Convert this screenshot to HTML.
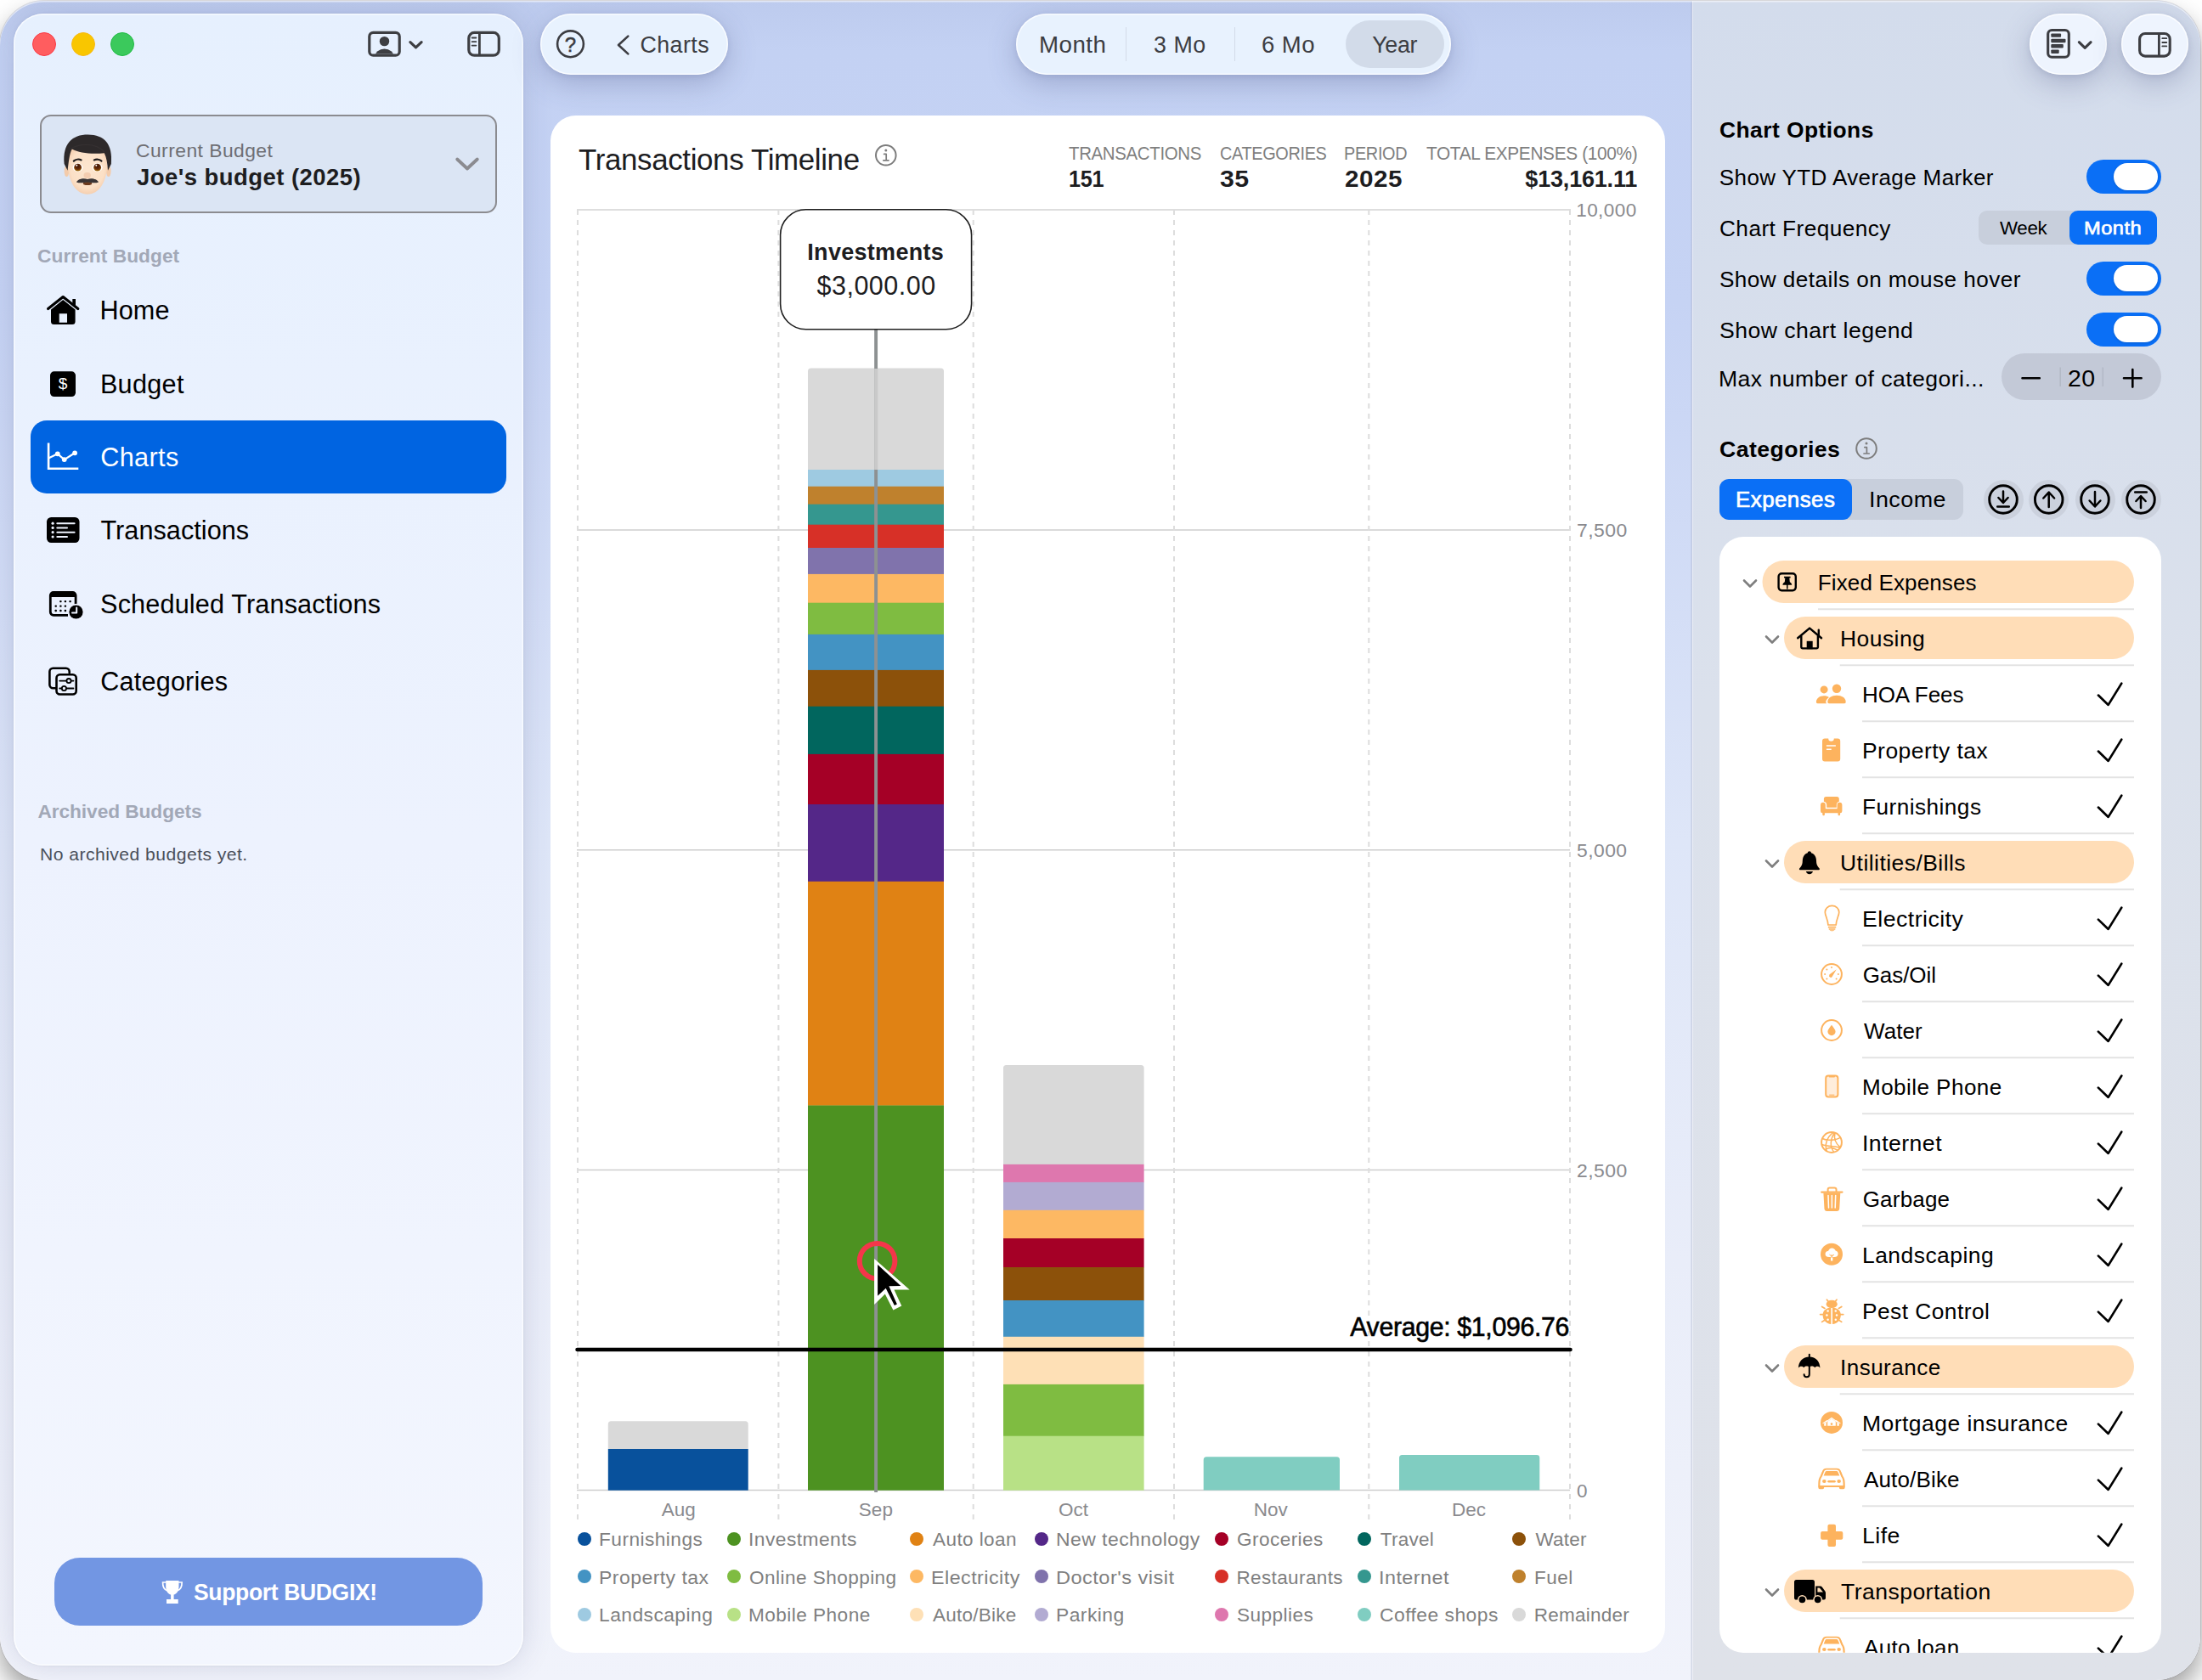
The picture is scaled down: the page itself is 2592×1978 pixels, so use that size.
<!DOCTYPE html><html><head><meta charset="utf-8"><title>Budgix</title><style>
*{box-sizing:border-box;margin:0;padding:0}
html,body{width:2592px;height:1978px;overflow:hidden;background:#fff}
body{font-family:"Liberation Sans",sans-serif;color:#000;position:relative}
.abs{position:absolute}
.t{position:absolute;white-space:nowrap;line-height:1}
svg{position:absolute;left:0;top:0;overflow:visible}
#win{position:absolute;left:0;top:1px;width:2590px;height:1977px;border-radius:52px;overflow:hidden;
 background:linear-gradient(180deg,#bdcbee 0%,#c3d1f3 3%,#c6d3f4 18%,#dee6f8 50%,#e9edf9 75%,#f1f3fb 100%);}
#in{position:absolute;left:0;top:-1px;width:2592px;height:1978px}
#winshadow{position:absolute;left:0;top:1px;width:2590px;height:1977px;border-radius:52px;box-shadow:0 0 0 1px rgba(120,120,130,.22),0 16px 30px rgba(0,0,0,.38)}
#sidebar{position:absolute;left:16px;top:16px;width:600px;height:1945px;border-radius:35px;
 background:linear-gradient(180deg,#e6f0fe 0%,#edf2fe 50%,#f3f6fe 100%);
 box-shadow:0 0 0 1.5px rgba(255,255,255,.65) inset,0 0 34px rgba(60,65,110,.17),0 0 3px rgba(60,65,110,.10);}
#insp{position:absolute;left:1993.4px;top:0;width:600px;height:1978px;
 background:linear-gradient(180deg,#d3dcec 0%,#dbe1ec 42%,#dfe2e9 100%);
 box-shadow:-1.3px 0 0 rgba(255,255,255,.7), -2.4px 0 0 rgba(140,150,185,.4)}
.pill{position:absolute;background:#e8f2fe;border-radius:36px;box-shadow:0 0 0 1.5px rgba(255,255,255,.7) inset,0 10px 34px rgba(60,70,120,.28),0 2px 6px rgba(60,70,120,.12)}
#card{position:absolute;left:648px;top:136px;width:1312px;height:1810px;border-radius:30px;background:#fff;}
.tl{position:absolute;width:28px;height:28px;border-radius:50%;top:38px}
#bsel{position:absolute;left:47px;top:135px;width:538px;height:116px;border-radius:13px;background:#dbe5f4;border:2px solid #8b8b90}
#navsel{position:absolute;left:36px;top:495px;width:560px;height:86px;border-radius:19px;background:#0064e1}
#support{position:absolute;left:64px;top:1834px;width:504px;height:80px;border-radius:30px;background:#7296e3}
</style></head><body>
<div id="winshadow"></div><div id="win"><div id="in">
<div id="insp"></div>
<div id="sidebar"></div>
<div id="card"></div>
<div class="tl" style="left:38px;background:#ff5d5f;border:1.5px solid #fa3a45"></div>
<div class="tl" style="left:84px;background:#f9c600;border:1.5px solid #f7b916"></div>
<div class="tl" style="left:130px;background:#3bc95c;border:1.5px solid #21bb45"></div>
<div id="bsel"></div>
<div class="t" style="left:159.9px;top:167px;font-size:22.00px;font-weight:400;color:#6e6e73;letter-spacing:0.45px;transform:scaleX(1.0376);transform-origin:0 50%;">Current Budget</div>
<div class="t" style="left:160.6px;top:195px;font-size:27.20px;font-weight:700;color:#1d1d1f;letter-spacing:0.45px;transform:scaleX(1.0105);transform-origin:0 50%;">Joe's budget (2025)</div>
<div class="t" style="left:44.1px;top:290px;font-size:22.70px;font-weight:700;color:#a2a8b7;letter-spacing:0.05px;">Current Budget</div>
<div id="navsel"></div>
<div class="t" style="left:117.6px;top:350px;font-size:30.60px;font-weight:400;color:#000;letter-spacing:0.08px;">Home</div>
<div class="t" style="left:117.9px;top:437px;font-size:30.60px;font-weight:400;color:#000;letter-spacing:0.32px;">Budget</div>
<div class="t" style="left:118.2px;top:523px;font-size:30.60px;font-weight:400;color:#fff;letter-spacing:0.40px;">Charts</div>
<div class="t" style="left:118.5px;top:609px;font-size:30.60px;font-weight:400;color:#000;letter-spacing:0.05px;">Transactions</div>
<div class="t" style="left:118.1px;top:696px;font-size:30.60px;font-weight:400;color:#000;letter-spacing:0.16px;">Scheduled Transactions</div>
<div class="t" style="left:118.2px;top:787px;font-size:30.60px;font-weight:400;color:#000;letter-spacing:0.21px;">Categories</div>
<div class="t" style="left:44.4px;top:944px;font-size:22.70px;font-weight:700;color:#a2a8b7;letter-spacing:-0.06px;">Archived Budgets</div>
<div class="t" style="left:46.8px;top:995px;font-size:21.00px;font-weight:400;color:#4a4f5a;letter-spacing:0.45px;transform:scaleX(1.0065);transform-origin:0 50%;">No archived budgets yet.</div>
<div id="support"></div>
<div class="t" style="left:228.2px;top:1862px;font-size:26.80px;font-weight:700;color:#fff;letter-spacing:-0.35px;transform:scaleX(0.9895);transform-origin:0 50%;">Support BUDGIX!</div>
<svg width="2592" height="1978" viewBox="0 0 2592 1978" fill="none">
<defs><clipPath id="cpP"><rect x="436.4" y="40" width="32.2" height="23.6" rx="2.5"/></clipPath></defs>
<rect x="434.8" y="38.4" width="35.4" height="26.8" rx="4.5" stroke="#3d3e42" stroke-width="3.2"/>
<g clip-path="url(#cpP)" fill="#3d3e42"><circle cx="452.5" cy="48.6" r="5.7"/><ellipse cx="452.5" cy="67" rx="11.2" ry="9.6"/></g>
<path d="M482.9 49.7 L489.5 55.9 L496.1 49.7" stroke="#3d3e42" stroke-width="3.2" stroke-linecap="round" stroke-linejoin="round"/>
<rect x="551.8" y="38.4" width="35.5" height="26.8" rx="6.5" stroke="#3d3e42" stroke-width="3.2"/>
<path d="M564.4 38.4V65.2" stroke="#3d3e42" stroke-width="2.8"/>
<path d="M555.6 44.5h4.8M555.6 49.1h4.8M555.6 53.6h4.8" stroke="#3d3e42" stroke-width="1.8" stroke-linecap="round"/>
<path d="M538.2 187.5 L550 198.5 L561.8 187.5" stroke="#8b8b90" stroke-width="3.8" stroke-linecap="round" stroke-linejoin="round"/>
<g transform="translate(60,145)"><defs><radialGradient id="skin" cx="0.5" cy="0.45" r="0.6"><stop offset="0" stop-color="#fde6cf"/><stop offset="0.7" stop-color="#fbe0c6"/><stop offset="1" stop-color="#f3c8a6"/></radialGradient><radialGradient id="iris" cx="0.5" cy="0.3" r="0.8"><stop offset="0" stop-color="#3c1405"/><stop offset="0.55" stop-color="#6b2e08"/><stop offset="1" stop-color="#c9960c"/></radialGradient></defs><ellipse cx="18.4" cy="56.5" rx="2.8" ry="6.6" fill="#f3cbaa"/><ellipse cx="67.8" cy="56.5" rx="2.8" ry="6.6" fill="#f3cbaa"/><path d="M19.6 45 C19.6 70 30 83.7 43 83.7 C56 83.7 66.5 70 66.5 45 L66.5 28 L19.6 28 Z" fill="url(#skin)"/><path d="M15.6 48 C13.5 24 25 13.6 43.5 13.6 C63 13.6 73 25 70.9 48 L67 55.8 C66.6 48 65.4 40.5 62.8 35.2 C50 36.8 33 35.6 24.8 30.6 C21.6 36 20.6 48 19.6 55.8 Z" fill="#2d292a"/><path d="M22 31 C32 24 52 22 63 34" stroke="#3a3637" stroke-width="1.2" fill="none" opacity=".6"/><path d="M26.8 44.6 C29 42.4 33 42.2 35.6 43.4" stroke="#1e1b1c" stroke-width="2.2" stroke-linecap="round" fill="none"/><path d="M50.8 43.4 C53.4 42.2 57.4 42.4 59.4 44.6" stroke="#1e1b1c" stroke-width="2.2" stroke-linecap="round" fill="none"/><ellipse cx="31.6" cy="52.2" rx="6" ry="5" fill="#fff"/><ellipse cx="54.6" cy="52.2" rx="6" ry="5" fill="#fff"/><circle cx="31.6" cy="52.2" r="4.4" fill="url(#iris)"/><circle cx="54.6" cy="52.2" r="4.4" fill="url(#iris)"/><circle cx="30.3" cy="49.8" r="1" fill="#fff"/><circle cx="53.3" cy="49.8" r="1" fill="#fff"/><ellipse cx="42.7" cy="61.4" rx="4.2" ry="3.4" fill="#f4cdb0"/><ellipse cx="43" cy="71" rx="5.2" ry="2" fill="#6b3a1e"/><path d="M30 69.4 C31.5 66 38 64.2 43 66 C48 64.2 54.5 66 56 69.4 C52 71.2 47 69.8 43 69.4 C39 69.8 34 71.2 30 69.4 Z" fill="#3a3536"/></g>
<path d="M56.6 363.6 L74.2 349.6 L91.8 363.6" stroke="#000" stroke-width="3.2" stroke-linecap="round" stroke-linejoin="round"/>
<path d="M85.3 352h3.7v8.5l-3.7-3z" fill="#000"/>
<path d="M60 364.5 L74.2 353 L88.6 364.5 V378.5 a3.5 3.5 0 0 1 -3.5 3.5 H63.5 a3.5 3.5 0 0 1 -3.5 -3.5 Z M69.7 369.3 V379.8 H79 V369.3 Z" fill="#000" fill-rule="evenodd"/>
<rect x="59" y="437.3" width="30" height="29.8" rx="4.8" fill="#000"/>
<path d="M57.1 522.9 V551.7 H91" stroke="#fff" stroke-width="2.6" stroke-linecap="square" stroke-linejoin="miter"/>
<path d="M57.6 539.3 L67.8 534.3 L75.7 541.1 L88.1 533.3" stroke="#fff" stroke-width="2.2"/>
<circle cx="67.8" cy="534.3" r="2.9" fill="#fff"/><circle cx="75.7" cy="541.1" r="2.9" fill="#fff"/><circle cx="88.1" cy="533.3" r="2.9" fill="#fff"/>
<rect x="55" y="609" width="38.5" height="30" rx="5.2" fill="#000"/>
<circle cx="62.1" cy="616.2" r="1.6" fill="#eef3fe"/><path d="M67.3 616.2 H87.6" stroke="#eef3fe" stroke-width="2" stroke-linecap="round"/>
<circle cx="62.1" cy="621.4" r="1.6" fill="#eef3fe"/><path d="M67.3 621.4 H79.0" stroke="#eef3fe" stroke-width="2" stroke-linecap="round"/>
<circle cx="62.1" cy="626.7" r="1.6" fill="#eef3fe"/><path d="M67.3 626.7 H87.6" stroke="#eef3fe" stroke-width="2" stroke-linecap="round"/>
<circle cx="62.1" cy="632.0" r="1.6" fill="#eef3fe"/><path d="M67.3 632.0 H79.0" stroke="#eef3fe" stroke-width="2" stroke-linecap="round"/>
<path d="M63 697.3 H85.4 a3.7 3.7 0 0 1 3.7 3.7 V713 M80 724.3 H63 a3.7 3.7 0 0 1 -3.7 -3.7 V701 a3.7 3.7 0 0 1 3.7 -3.7" stroke="#000" stroke-width="2.8"/>
<path d="M59.3 703 V700.5 a3.7 3.7 0 0 1 3.7 -3.7 H85.4 a3.7 3.7 0 0 1 3.7 3.7 V703 Z" fill="#000"/>
<rect x="70.2" y="706.9" width="2.4" height="2.4" rx=".8" fill="#000"/>
<rect x="75.7" y="706.9" width="2.4" height="2.4" rx=".8" fill="#000"/>
<rect x="81.4" y="706.9" width="2.4" height="2.4" rx=".8" fill="#000"/>
<rect x="64.5" y="712.4" width="2.4" height="2.4" rx=".8" fill="#000"/>
<rect x="70.2" y="712.4" width="2.4" height="2.4" rx=".8" fill="#000"/>
<rect x="75.7" y="712.4" width="2.4" height="2.4" rx=".8" fill="#000"/>
<rect x="64.5" y="717.8" width="2.4" height="2.4" rx=".8" fill="#000"/>
<rect x="70.2" y="717.8" width="2.4" height="2.4" rx=".8" fill="#000"/>
<rect x="75.7" y="717.8" width="2.4" height="2.4" rx=".8" fill="#000"/>
<circle cx="89.5" cy="720.5" r="9.8" fill="#eef2fe"/><circle cx="89.5" cy="720.5" r="8.1" fill="#000"/>
<path d="M90.2 715.4 V721.5 H85" stroke="#eef2fe" stroke-width="2" stroke-linecap="round" stroke-linejoin="round"/>
<path d="M65.2 810.3 H62.4 a4 4 0 0 1 -4 -4 V790.7 a4 4 0 0 1 4 -4 H77.7 a4 4 0 0 1 4 4 V792" stroke="#000" stroke-width="2.6" stroke-linecap="round"/>
<rect x="66.5" y="794.2" width="23.2" height="23.3" rx="4" stroke="#000" stroke-width="2.6"/>
<path d="M70.2 801.6 H78 M84 801.6 H86.4 M70.2 810.5 H72.4 M78.4 810.5 H86.4" stroke="#000" stroke-width="1.8" stroke-linecap="round"/>
<circle cx="81" cy="801.6" r="2.6" stroke="#000" stroke-width="1.8"/><circle cx="75.4" cy="810.5" r="2.6" stroke="#000" stroke-width="1.8"/>
<path d="M195.2 1861 H210.5 V1868 C210.5 1873.5 207.5 1877 204.6 1877.6 V1883 H209.7 V1888 H196 V1883 H201.1 V1877.6 C198.2 1877 195.2 1873.5 195.2 1868 Z" fill="#fff"/>
<path d="M195.6 1863 H191.6 C191.4 1868 193 1871.5 197.2 1873 M210.1 1863 H214.1 C214.3 1868 212.7 1871.5 208.5 1873" stroke="#fff" stroke-width="1.7" fill="none"/>
</svg>
<div class="t" style="left:74.0px;top:442px;font-size:19.00px;font-weight:400;color:#fff;letter-spacing:0.00px;transform:translateX(-50%) scaleX(1.0000);transform-origin:50% 50%;">$</div>
<div class="pill" style="left:636px;top:16px;width:221px;height:71.5px"></div>
<div class="pill" style="left:1196px;top:16px;width:512px;height:71.5px"></div>
<div class="abs" style="left:1584px;top:24px;width:116px;height:55.5px;border-radius:28px;background:#d2dbe9"></div>
<div class="abs" style="left:1324.5px;top:32px;width:1.5px;height:40px;background:#d3dbe8"></div>
<div class="abs" style="left:1452.5px;top:32px;width:1.5px;height:40px;background:#d3dbe8"></div>
<div class="pill" style="left:2389px;top:16px;width:91px;height:71.5px;background:#eef4fe"></div>
<div class="pill" style="left:2497px;top:16px;width:79px;height:71.5px;background:#eef4fe"></div>
<div class="t" style="left:753.5px;top:40px;font-size:26.80px;font-weight:400;color:#3c3d42;letter-spacing:0.43px;">Charts</div>
<div class="t" style="left:1222.8px;top:40px;font-size:26.80px;font-weight:400;color:#3c3d42;letter-spacing:0.45px;transform:scaleX(1.0338);transform-origin:0 50%;">Month</div>
<div class="t" style="left:1357.9px;top:40px;font-size:26.80px;font-weight:400;color:#3c3d42;letter-spacing:0.57px;">3 Mo</div>
<div class="t" style="left:1484.9px;top:40px;font-size:26.80px;font-weight:400;color:#3c3d42;letter-spacing:0.45px;transform:scaleX(1.0268);transform-origin:0 50%;">6 Mo</div>
<div class="t" style="left:1615.2px;top:40px;font-size:26.80px;font-weight:400;color:#3c3d42;letter-spacing:-0.28px;">Year</div>
<svg width="2592" height="1978" viewBox="0 0 2592 1978" fill="none">
<circle cx="671.5" cy="51.8" r="15.4" stroke="#3c3d42" stroke-width="2.6"/>
<path d="M728 53 L739.3 42.6 M728 53 L739.3 63.4" stroke="#3c3d42" stroke-width="2.6" stroke-linecap="round"/>
<rect x="2410.7" y="35.5" width="24.6" height="31.7" rx="4.5" stroke="#3c3d42" stroke-width="3.1"/>
<rect x="2414.3" y="39.4" width="11.8" height="4.4" rx="1" fill="#3c3d42"/>
<rect x="2414.3" y="45.8" width="17.2" height="4.4" rx="1" fill="#3c3d42"/>
<rect x="2414.3" y="52.1" width="14.5" height="4.4" rx="1" fill="#3c3d42"/>
<rect x="2414.3" y="58.6" width="9.4" height="4.4" rx="1" fill="#3c3d42"/>
<path d="M2447.3 49.7 L2454.2 56.3 L2461.1 49.7" stroke="#3c3d42" stroke-width="3.1" stroke-linecap="round" stroke-linejoin="round"/>
<rect x="2518.6" y="39.5" width="35.6" height="26.6" rx="6.5" stroke="#3c3d42" stroke-width="3.1"/>
<path d="M2541.4 39.5V66.1" stroke="#3c3d42" stroke-width="2.8"/>
<path d="M2545.3 45.2h5M2545.3 50h5M2545.3 54.4h5" stroke="#3c3d42" stroke-width="1.8" stroke-linecap="round"/>
</svg>
<div class="t" style="left:671.5px;top:41px;font-size:24.00px;font-weight:400;color:#3c3d42;letter-spacing:0.00px;transform:translateX(-50%) scaleX(1.0000);transform-origin:50% 50%;-webkit-text-stroke:.5px #3c3d42;">?</div>
<div class="t" style="left:680.5px;top:171px;font-size:35.50px;font-weight:400;color:#1d1d1f;letter-spacing:-0.35px;transform:scaleX(0.9825);transform-origin:0 50%;">Transactions Timeline</div>
<div class="t" style="left:1258.4px;top:171px;font-size:21.50px;font-weight:400;color:#7f7f7f;letter-spacing:-0.35px;transform:scaleX(0.9497);transform-origin:0 50%;">TRANSACTIONS</div>
<div class="t" style="left:1436.0px;top:171px;font-size:21.50px;font-weight:400;color:#7f7f7f;letter-spacing:-0.35px;transform:scaleX(0.9238);transform-origin:0 50%;">CATEGORIES</div>
<div class="t" style="left:1582.4px;top:171px;font-size:21.50px;font-weight:400;color:#7f7f7f;letter-spacing:-0.35px;transform:scaleX(0.9242);transform-origin:0 50%;">PERIOD</div>
<div class="t" style="left:1678.6px;top:171px;font-size:21.50px;font-weight:400;color:#7f7f7f;letter-spacing:-0.35px;transform:scaleX(0.9687);transform-origin:0 50%;">TOTAL EXPENSES (100%)</div>
<div class="t" style="left:1257.5px;top:198px;font-size:27.00px;font-weight:700;color:#1d1d1f;letter-spacing:-0.35px;transform:scaleX(0.9343);transform-origin:0 50%;">151</div>
<div class="t" style="left:1436.4px;top:198px;font-size:27.00px;font-weight:700;color:#1d1d1f;letter-spacing:0.45px;transform:scaleX(1.1197);transform-origin:0 50%;">35</div>
<div class="t" style="left:1583.1px;top:198px;font-size:27.00px;font-weight:700;color:#1d1d1f;letter-spacing:0.45px;transform:scaleX(1.0978);transform-origin:0 50%;">2025</div>
<div class="t" style="left:1927.1px;top:198px;font-size:27.00px;font-weight:700;color:#1d1d1f;letter-spacing:-0.19px;transform:translateX(-100%) scaleX(1.0000);transform-origin:100% 50%;">$13,161.11</div>
<svg width="2592" height="1978" viewBox="0 0 2592 1978" fill="none">
<circle cx="1042.8" cy="182.8" r="11.8" stroke="#7d7d7d" stroke-width="2"/>
<circle cx="1042.8" cy="176.9" r="1.5" fill="#7d7d7d"/><path d="M1040.6 181.4 H1043.2 V188.6 M1039.8 188.8 H1046" stroke="#7d7d7d" stroke-width="1.7" stroke-linecap="round" stroke-linejoin="round"/>
<path d="M679 247.1 H1849" stroke="#dedede" stroke-width="2"/>
<path d="M679 623.9 H1848" stroke="#cecece" stroke-width="1.5"/>
<path d="M679 1000.7 H1848" stroke="#cecece" stroke-width="1.5"/>
<path d="M679 1377.6 H1848" stroke="#cecece" stroke-width="1.5"/>
<path d="M679 1754.4 H1848" stroke="#cecece" stroke-width="1.5"/>
<path d="M680.0 247.1 V1788.9" stroke="#dddddd" stroke-width="2" stroke-dasharray="5.8 6.2"/>
<path d="M916.4 247.1 V1788.9" stroke="#dddddd" stroke-width="2" stroke-dasharray="5.8 6.2"/>
<path d="M1145.7 247.1 V1788.9" stroke="#dddddd" stroke-width="2" stroke-dasharray="5.8 6.2"/>
<path d="M1382.0 247.1 V1788.9" stroke="#dddddd" stroke-width="2" stroke-dasharray="5.8 6.2"/>
<path d="M1611.3 247.1 V1788.9" stroke="#dddddd" stroke-width="2" stroke-dasharray="5.8 6.2"/>
<path d="M1848.0 247.1 V1788.9" stroke="#dddddd" stroke-width="2" stroke-dasharray="5.8 6.2"/>
<path d="M715.8 1706.0 V1676.8 a3.5 3.5 0 0 1 3.5 -3.5 H877.2 a3.5 3.5 0 0 1 3.5 3.5 V1706.0 Z" fill="#d9d9d9"/>
<rect x="715.8" y="1706.0" width="164.9" height="48.7" fill="#08519c"/>
<path d="M951.0 553.0 V436.9 a3.5 3.5 0 0 1 3.5 -3.5 H1107.5 a3.5 3.5 0 0 1 3.5 3.5 V553.0 Z" fill="#d9d9d9"/>
<rect x="951.0" y="553.0" width="160.0" height="20.0" fill="#9ecae1"/>
<rect x="951.0" y="572.7" width="160.0" height="21.3" fill="#bf812d"/>
<rect x="951.0" y="593.7" width="160.0" height="24.3" fill="#35978f"/>
<rect x="951.0" y="617.7" width="160.0" height="27.6" fill="#d73027"/>
<rect x="951.0" y="645.0" width="160.0" height="31.2" fill="#8073ac"/>
<rect x="951.0" y="675.9" width="160.0" height="34.1" fill="#fdb863"/>
<rect x="951.0" y="709.7" width="160.0" height="37.5" fill="#7fbc41"/>
<rect x="951.0" y="746.9" width="160.0" height="42.3" fill="#4393c3"/>
<rect x="951.0" y="788.9" width="160.0" height="43.1" fill="#8c510a"/>
<rect x="951.0" y="831.7" width="160.0" height="56.5" fill="#01665e"/>
<rect x="951.0" y="887.9" width="160.0" height="59.4" fill="#a50026"/>
<rect x="951.0" y="947.0" width="160.0" height="91.1" fill="#542788"/>
<rect x="951.0" y="1037.8" width="160.0" height="264.0" fill="#e08214"/>
<rect x="951.0" y="1301.5" width="160.0" height="453.2" fill="#4d9221"/>
<path d="M1181.0 1370.9 V1257.5 a3.5 3.5 0 0 1 3.5 -3.5 H1343.1 a3.5 3.5 0 0 1 3.5 3.5 V1370.9 Z" fill="#d9d9d9"/>
<rect x="1181.0" y="1370.9" width="165.6" height="21.3" fill="#de77ae"/>
<rect x="1181.0" y="1391.9" width="165.6" height="33.2" fill="#b2abd2"/>
<rect x="1181.0" y="1424.8" width="165.6" height="33.5" fill="#fdb863"/>
<rect x="1181.0" y="1458.0" width="165.6" height="34.3" fill="#a50026"/>
<rect x="1181.0" y="1492.0" width="165.6" height="39.3" fill="#8c510a"/>
<rect x="1181.0" y="1531.0" width="165.6" height="43.1" fill="#4393c3"/>
<rect x="1181.0" y="1573.8" width="165.6" height="56.4" fill="#fee0b6"/>
<rect x="1181.0" y="1629.9" width="165.6" height="61.1" fill="#7fbc41"/>
<rect x="1181.0" y="1690.7" width="165.6" height="64.0" fill="#b8e186"/>
<path d="M1416.7 1754.4 V1718.7 a3.5 3.5 0 0 1 3.5 -3.5 H1573.5 a3.5 3.5 0 0 1 3.5 3.5 V1754.4 Z" fill="#80cdc1"/>
<path d="M1647.0 1754.4 V1716.5 a3.5 3.5 0 0 1 3.5 -3.5 H1808.8 a3.5 3.5 0 0 1 3.5 3.5 V1754.4 Z" fill="#80cdc1"/>
<path d="M1031.1 388 V1757" stroke="#8d9192" stroke-width="3.9"/>
<path d="M1031.1 434 V553" stroke="#c9c9c9" stroke-width="3.9"/>
<path d="M679.5 1589 H1848.5" stroke="#000" stroke-width="4.5" stroke-linecap="round"/>
<rect x="918.6" y="246.8" width="225" height="141" rx="30" fill="#fff" stroke="#1f1f1f" stroke-width="1.6"/>
<circle cx="1032.6" cy="1484.7" r="20.8" stroke="#f5364a" stroke-width="6"/>
<path d="M1029.1 1482.1 V1536.1 L1041.8 1523.6 L1051.4 1542.6 L1061.3 1537.5 L1052.5 1518.6 H1070.7 Z" fill="#fff"/>
<path d="M1033.1 1488.9 V1525.7 L1042.7 1516.8 L1052.9 1537 L1055.9 1535.5 L1046.4 1514.3 L1060.4 1513.9 Z" fill="#000"/>
</svg>
<div class="t" style="left:1030.7px;top:284px;font-size:27.00px;font-weight:700;color:#1d1d1f;letter-spacing:0.29px;transform:translateX(-50%) scaleX(1.0000);transform-origin:50% 50%;">Investments</div>
<div class="t" style="left:1031.6px;top:321px;font-size:30.50px;font-weight:400;color:#1d1d1f;letter-spacing:0.49px;transform:translateX(-50%) scaleX(1.0000);transform-origin:50% 50%;">$3,000.00</div>
<div class="t" style="left:1847.3px;top:1547px;font-size:31.20px;font-weight:400;color:#000;letter-spacing:-0.35px;transform:translateX(-100%) scaleX(0.9711);transform-origin:100% 50%;-webkit-text-stroke:.6px #000;">Average: $1,096.76</div>
<div class="t" style="left:1855.2px;top:237px;font-size:22.50px;font-weight:400;color:#8a8a8e;letter-spacing:0.45px;">10,000</div>
<div class="t" style="left:1855.8px;top:614px;font-size:22.50px;font-weight:400;color:#8a8a8e;letter-spacing:0.45px;transform:scaleX(1.0207);transform-origin:0 50%;">7,500</div>
<div class="t" style="left:1856.0px;top:991px;font-size:22.50px;font-weight:400;color:#8a8a8e;letter-spacing:0.45px;transform:scaleX(1.0167);transform-origin:0 50%;">5,000</div>
<div class="t" style="left:1855.8px;top:1368px;font-size:22.50px;font-weight:400;color:#8a8a8e;letter-spacing:0.45px;transform:scaleX(1.0207);transform-origin:0 50%;">2,500</div>
<div class="t" style="left:1856.1px;top:1745px;font-size:22.50px;font-weight:400;color:#8a8a8e;letter-spacing:0.00px;">0</div>
<div class="t" style="left:798.7px;top:1767px;font-size:22.50px;font-weight:400;color:#8a8a8e;letter-spacing:0.00px;transform:translateX(-50%) scaleX(1.0000);transform-origin:50% 50%;">Aug</div>
<div class="t" style="left:1030.9px;top:1767px;font-size:22.50px;font-weight:400;color:#8a8a8e;letter-spacing:0.00px;transform:translateX(-50%) scaleX(1.0000);transform-origin:50% 50%;">Sep</div>
<div class="t" style="left:1263.5px;top:1767px;font-size:22.50px;font-weight:400;color:#8a8a8e;letter-spacing:0.00px;transform:translateX(-50%) scaleX(1.0000);transform-origin:50% 50%;">Oct</div>
<div class="t" style="left:1495.7px;top:1767px;font-size:22.50px;font-weight:400;color:#8a8a8e;letter-spacing:0.00px;transform:translateX(-50%) scaleX(1.0000);transform-origin:50% 50%;">Nov</div>
<div class="t" style="left:1729.0px;top:1767px;font-size:22.50px;font-weight:400;color:#8a8a8e;letter-spacing:0.00px;transform:translateX(-50%) scaleX(1.0000);transform-origin:50% 50%;">Dec</div>
<div class="abs" style="left:679.9px;top:1803.9px;width:16px;height:16px;border-radius:8px;background:#08519c"></div>
<div class="t" style="left:705.3px;top:1802px;font-size:22.50px;font-weight:400;color:#7f7f7f;letter-spacing:0.45px;transform:scaleX(1.0082);transform-origin:0 50%;">Furnishings</div>
<div class="abs" style="left:855.9px;top:1803.9px;width:16px;height:16px;border-radius:8px;background:#4d9221"></div>
<div class="t" style="left:881.0px;top:1802px;font-size:22.50px;font-weight:400;color:#7f7f7f;letter-spacing:0.45px;transform:scaleX(1.0125);transform-origin:0 50%;">Investments</div>
<div class="abs" style="left:1070.9px;top:1803.9px;width:16px;height:16px;border-radius:8px;background:#e08214"></div>
<div class="t" style="left:1098.1px;top:1802px;font-size:22.50px;font-weight:400;color:#7f7f7f;letter-spacing:0.41px;">Auto loan</div>
<div class="abs" style="left:1217.9px;top:1803.9px;width:16px;height:16px;border-radius:8px;background:#542788"></div>
<div class="t" style="left:1243.3px;top:1802px;font-size:22.50px;font-weight:400;color:#7f7f7f;letter-spacing:0.45px;transform:scaleX(1.0199);transform-origin:0 50%;">New technology</div>
<div class="abs" style="left:1430.0px;top:1803.9px;width:16px;height:16px;border-radius:8px;background:#a50026"></div>
<div class="t" style="left:1456.1px;top:1802px;font-size:22.50px;font-weight:400;color:#7f7f7f;letter-spacing:0.45px;transform:scaleX(1.0018);transform-origin:0 50%;">Groceries</div>
<div class="abs" style="left:1598.0px;top:1803.9px;width:16px;height:16px;border-radius:8px;background:#01665e"></div>
<div class="t" style="left:1624.8px;top:1802px;font-size:22.50px;font-weight:400;color:#7f7f7f;letter-spacing:0.25px;">Travel</div>
<div class="abs" style="left:1780.3px;top:1803.9px;width:16px;height:16px;border-radius:8px;background:#8c510a"></div>
<div class="t" style="left:1807.5px;top:1802px;font-size:22.50px;font-weight:400;color:#7f7f7f;letter-spacing:0.19px;">Water</div>
<div class="abs" style="left:679.9px;top:1848.2px;width:16px;height:16px;border-radius:8px;background:#4393c3"></div>
<div class="t" style="left:705.3px;top:1847px;font-size:22.50px;font-weight:400;color:#7f7f7f;letter-spacing:0.45px;transform:scaleX(1.0218);transform-origin:0 50%;">Property tax</div>
<div class="abs" style="left:855.9px;top:1848.2px;width:16px;height:16px;border-radius:8px;background:#7fbc41"></div>
<div class="t" style="left:882.1px;top:1847px;font-size:22.50px;font-weight:400;color:#7f7f7f;letter-spacing:0.45px;transform:scaleX(1.0028);transform-origin:0 50%;">Online Shopping</div>
<div class="abs" style="left:1070.9px;top:1848.2px;width:16px;height:16px;border-radius:8px;background:#fdb863"></div>
<div class="t" style="left:1096.2px;top:1847px;font-size:22.50px;font-weight:400;color:#7f7f7f;letter-spacing:0.45px;transform:scaleX(1.0354);transform-origin:0 50%;">Electricity</div>
<div class="abs" style="left:1217.9px;top:1848.2px;width:16px;height:16px;border-radius:8px;background:#8073ac"></div>
<div class="t" style="left:1243.2px;top:1847px;font-size:22.50px;font-weight:400;color:#7f7f7f;letter-spacing:0.45px;transform:scaleX(1.0479);transform-origin:0 50%;">Doctor's visit</div>
<div class="abs" style="left:1430.0px;top:1848.2px;width:16px;height:16px;border-radius:8px;background:#d73027"></div>
<div class="t" style="left:1455.4px;top:1847px;font-size:22.50px;font-weight:400;color:#7f7f7f;letter-spacing:0.39px;">Restaurants</div>
<div class="abs" style="left:1598.0px;top:1848.2px;width:16px;height:16px;border-radius:8px;background:#35978f"></div>
<div class="t" style="left:1623.1px;top:1847px;font-size:22.50px;font-weight:400;color:#7f7f7f;letter-spacing:0.45px;transform:scaleX(1.0375);transform-origin:0 50%;">Internet</div>
<div class="abs" style="left:1780.3px;top:1848.2px;width:16px;height:16px;border-radius:8px;background:#bf812d"></div>
<div class="t" style="left:1805.7px;top:1847px;font-size:22.50px;font-weight:400;color:#7f7f7f;letter-spacing:0.45px;transform:scaleX(1.0009);transform-origin:0 50%;">Fuel</div>
<div class="abs" style="left:679.9px;top:1892.5px;width:16px;height:16px;border-radius:8px;background:#9ecae1"></div>
<div class="t" style="left:705.3px;top:1891px;font-size:22.50px;font-weight:400;color:#7f7f7f;letter-spacing:0.45px;transform:scaleX(1.0130);transform-origin:0 50%;">Landscaping</div>
<div class="abs" style="left:855.9px;top:1892.5px;width:16px;height:16px;border-radius:8px;background:#b8e186"></div>
<div class="t" style="left:881.3px;top:1891px;font-size:22.50px;font-weight:400;color:#7f7f7f;letter-spacing:0.45px;transform:scaleX(1.0048);transform-origin:0 50%;">Mobile Phone</div>
<div class="abs" style="left:1070.9px;top:1892.5px;width:16px;height:16px;border-radius:8px;background:#fee0b6"></div>
<div class="t" style="left:1098.1px;top:1891px;font-size:22.50px;font-weight:400;color:#7f7f7f;letter-spacing:0.24px;">Auto/Bike</div>
<div class="abs" style="left:1217.9px;top:1892.5px;width:16px;height:16px;border-radius:8px;background:#b2abd2"></div>
<div class="t" style="left:1243.3px;top:1891px;font-size:22.50px;font-weight:400;color:#7f7f7f;letter-spacing:0.45px;transform:scaleX(1.0142);transform-origin:0 50%;">Parking</div>
<div class="abs" style="left:1430.0px;top:1892.5px;width:16px;height:16px;border-radius:8px;background:#de77ae"></div>
<div class="t" style="left:1456.2px;top:1891px;font-size:22.50px;font-weight:400;color:#7f7f7f;letter-spacing:0.45px;transform:scaleX(1.0042);transform-origin:0 50%;">Supplies</div>
<div class="abs" style="left:1598.0px;top:1892.5px;width:16px;height:16px;border-radius:8px;background:#80cdc1"></div>
<div class="t" style="left:1624.1px;top:1891px;font-size:22.50px;font-weight:400;color:#7f7f7f;letter-spacing:0.45px;transform:scaleX(1.0161);transform-origin:0 50%;">Coffee shops</div>
<div class="abs" style="left:1780.3px;top:1892.5px;width:16px;height:16px;border-radius:8px;background:#d9d9d9"></div>
<div class="t" style="left:1805.7px;top:1891px;font-size:22.50px;font-weight:400;color:#7f7f7f;letter-spacing:0.25px;">Remainder</div>
<div class="t" style="left:2023.9px;top:141px;font-size:25.50px;font-weight:700;color:#000;letter-spacing:0.45px;transform:scaleX(1.0338);transform-origin:0 50%;">Chart Options</div>
<div class="t" style="left:2023.8px;top:196px;font-size:26.00px;font-weight:400;color:#000;letter-spacing:0.39px;">Show YTD Average Marker</div>
<div class="t" style="left:2023.7px;top:256px;font-size:26.00px;font-weight:400;color:#000;letter-spacing:0.45px;transform:scaleX(1.0076);transform-origin:0 50%;">Chart Frequency</div>
<div class="t" style="left:2023.8px;top:316px;font-size:26.00px;font-weight:400;color:#000;letter-spacing:0.45px;transform:scaleX(1.0044);transform-origin:0 50%;">Show details on mouse hover</div>
<div class="t" style="left:2023.8px;top:376px;font-size:26.00px;font-weight:400;color:#000;letter-spacing:0.45px;transform:scaleX(1.0230);transform-origin:0 50%;">Show chart legend</div>
<div class="t" style="left:2022.9px;top:433px;font-size:26.00px;font-weight:400;color:#000;letter-spacing:0.45px;transform:scaleX(1.0225);transform-origin:0 50%;">Max number of categori...</div>
<div class="abs" style="left:2456px;top:188.0px;width:88px;height:40px;border-radius:20px;background:#0a6ff6"></div>
<div class="abs" style="left:2488px;top:192.2px;width:52px;height:31.5px;border-radius:16px;background:#fff;box-shadow:0 1px 3px rgba(0,0,0,.15)"></div>
<div class="abs" style="left:2456px;top:307.5px;width:88px;height:40px;border-radius:20px;background:#0a6ff6"></div>
<div class="abs" style="left:2488px;top:311.7px;width:52px;height:31.5px;border-radius:16px;background:#fff;box-shadow:0 1px 3px rgba(0,0,0,.15)"></div>
<div class="abs" style="left:2456px;top:367.5px;width:88px;height:40px;border-radius:20px;background:#0a6ff6"></div>
<div class="abs" style="left:2488px;top:371.7px;width:52px;height:31.5px;border-radius:16px;background:#fff;box-shadow:0 1px 3px rgba(0,0,0,.15)"></div>
<div class="abs" style="left:2329px;top:248px;width:210px;height:40px;border-radius:10px;background:#c8cfdc"></div>
<div class="abs" style="left:2436px;top:248px;width:103px;height:40px;border-radius:10px;background:#0a6ff6"></div>
<div class="t" style="left:2354.0px;top:257px;font-size:22.70px;font-weight:400;color:#000;letter-spacing:-0.35px;transform:scaleX(0.9855);transform-origin:0 50%;">Week</div>
<div class="t" style="left:2453.2px;top:257px;font-size:22.70px;font-weight:400;color:#fff;letter-spacing:0.45px;transform:scaleX(1.0433);transform-origin:0 50%;-webkit-text-stroke:.7px #fff;">Month</div>
<div class="abs" style="left:2356px;top:416px;width:188px;height:55px;border-radius:28px;background:#c3c9d7"></div>
<div class="t" style="left:2433.9px;top:433px;font-size:27.00px;font-weight:400;color:#000;letter-spacing:0.45px;transform:scaleX(1.0560);transform-origin:0 50%;">20</div>
<div class="t" style="left:2023.9px;top:517px;font-size:25.50px;font-weight:700;color:#000;letter-spacing:0.45px;transform:scaleX(1.0445);transform-origin:0 50%;">Categories</div>
<div class="abs" style="left:2024px;top:564px;width:287px;height:47.5px;border-radius:11px;background:#c8cfdc"></div>
<div class="abs" style="left:2024px;top:564px;width:156px;height:47.5px;border-radius:11px;background:#0a6ff6"></div>
<div class="t" style="left:2042.7px;top:576px;font-size:25.50px;font-weight:400;color:#fff;letter-spacing:0.45px;transform:scaleX(1.0155);transform-origin:0 50%;-webkit-text-stroke:.7px #fff;">Expenses</div>
<div class="t" style="left:2199.9px;top:576px;font-size:25.50px;font-weight:400;color:#000;letter-spacing:0.45px;transform:scaleX(1.0536);transform-origin:0 50%;">Income</div>
<div class="abs" style="left:2334.5px;top:564.5px;width:47px;height:47px;border-radius:50%;background:#cbd1dd"></div>
<div class="abs" style="left:2388.2px;top:564.5px;width:47px;height:47px;border-radius:50%;background:#cbd1dd"></div>
<div class="abs" style="left:2442.5px;top:564.5px;width:47px;height:47px;border-radius:50%;background:#cbd1dd"></div>
<div class="abs" style="left:2496.5px;top:564.5px;width:47px;height:47px;border-radius:50%;background:#cbd1dd"></div>
<div class="abs" style="left:2024px;top:631.5px;width:520px;height:1314.3px;border-radius:28px;background:#fff;overflow:hidden" id="list"></div>
<svg width="2592" height="1978" viewBox="0 0 2592 1978" fill="none">
<defs><clipPath id="cpL"><rect x="2024.5" y="631.5" width="519.5" height="1314.3" rx="28"/></clipPath></defs>
<path d="M2380.5 445.3 H2400.8 M2500 445.3 H2520.6 M2510.3 435 V455.6" stroke="#000" stroke-width="2.6" stroke-linecap="round"/>
<path d="M2425.2 432.5 V455 M2475.3 432.5 V455" stroke="#b3b9c6" stroke-width="1.5"/>
<circle cx="2197" cy="528" r="11.8" stroke="#7d7d7d" stroke-width="2"/>
<circle cx="2197" cy="522.1" r="1.5" fill="#7d7d7d"/><path d="M2194.8 526.6 H2197.4 V533.8 M2194 534 H2200.2" stroke="#7d7d7d" stroke-width="1.7" stroke-linecap="round" stroke-linejoin="round"/>
<circle cx="2358.0" cy="588" r="16.3" stroke="#000" stroke-width="2.9"/>
<path d="M2358.0 578.5 V591.5 M2352.4 586 L2358.0 592 L2363.6 586 M2351.2 596.5 H2364.8" stroke="#000" stroke-width="2.5" stroke-linecap="round" stroke-linejoin="round"/>
<circle cx="2411.7" cy="588" r="16.3" stroke="#000" stroke-width="2.9"/>
<path d="M2411.7 597 V580 M2405.3 586.5 L2411.7 579.5 L2418.1 586.5" stroke="#000" stroke-width="2.5" stroke-linecap="round" stroke-linejoin="round"/>
<circle cx="2466.0" cy="588" r="16.3" stroke="#000" stroke-width="2.9"/>
<path d="M2466.0 579 V596 M2459.6 589.5 L2466.0 596.5 L2472.4 589.5" stroke="#000" stroke-width="2.5" stroke-linecap="round" stroke-linejoin="round"/>
<circle cx="2520.0" cy="588" r="16.3" stroke="#000" stroke-width="2.9"/>
<path d="M2520.0 598 V584.5 M2514.4 590 L2520.0 584 L2525.6 590 M2513.2 579.5 H2526.8" stroke="#000" stroke-width="2.5" stroke-linecap="round" stroke-linejoin="round"/>
<g clip-path="url(#cpL)">
<rect x="2074.5" y="660.0" width="437.5" height="50" rx="25" fill="#ffddb7"/>
<path d="M2053 683.5 L2060 690.5 L2067 683.5" stroke="#7f7f7f" stroke-width="2.6" stroke-linecap="round" stroke-linejoin="round"/>
<path d="M2140.0 717.3 H2512" stroke="#e3e3e3" stroke-width="2"/>
<rect x="2100" y="726.0" width="412" height="50" rx="25" fill="#ffddb7"/>
<path d="M2079 749.5 L2086 756.5 L2093 749.5" stroke="#7f7f7f" stroke-width="2.6" stroke-linecap="round" stroke-linejoin="round"/>
<path d="M2165.7 783.3 H2512" stroke="#e3e3e3" stroke-width="2"/>
<path d="M2469.9 818.6 L2481.7 829.9 L2497.3 804.6" stroke="#000" stroke-width="2.7" stroke-linecap="round" stroke-linejoin="round"/>
<path d="M2192.0 849.3 H2512" stroke="#e3e3e3" stroke-width="2"/>
<path d="M2469.9 884.6 L2481.7 895.9 L2497.3 870.6" stroke="#000" stroke-width="2.7" stroke-linecap="round" stroke-linejoin="round"/>
<path d="M2192.0 915.3 H2512" stroke="#e3e3e3" stroke-width="2"/>
<path d="M2469.9 950.6 L2481.7 961.9 L2497.3 936.6" stroke="#000" stroke-width="2.7" stroke-linecap="round" stroke-linejoin="round"/>
<path d="M2192.0 981.3 H2512" stroke="#e3e3e3" stroke-width="2"/>
<rect x="2100" y="990.0" width="412" height="50" rx="25" fill="#ffddb7"/>
<path d="M2079 1013.5 L2086 1020.5 L2093 1013.5" stroke="#7f7f7f" stroke-width="2.6" stroke-linecap="round" stroke-linejoin="round"/>
<path d="M2165.7 1047.3 H2512" stroke="#e3e3e3" stroke-width="2"/>
<path d="M2469.9 1082.6 L2481.7 1093.9 L2497.3 1068.6" stroke="#000" stroke-width="2.7" stroke-linecap="round" stroke-linejoin="round"/>
<path d="M2192.0 1113.3 H2512" stroke="#e3e3e3" stroke-width="2"/>
<path d="M2469.9 1148.6 L2481.7 1159.9 L2497.3 1134.6" stroke="#000" stroke-width="2.7" stroke-linecap="round" stroke-linejoin="round"/>
<path d="M2192.0 1179.3 H2512" stroke="#e3e3e3" stroke-width="2"/>
<path d="M2469.9 1214.6 L2481.7 1225.9 L2497.3 1200.6" stroke="#000" stroke-width="2.7" stroke-linecap="round" stroke-linejoin="round"/>
<path d="M2192.0 1245.3 H2512" stroke="#e3e3e3" stroke-width="2"/>
<path d="M2469.9 1280.6 L2481.7 1291.9 L2497.3 1266.6" stroke="#000" stroke-width="2.7" stroke-linecap="round" stroke-linejoin="round"/>
<path d="M2192.0 1311.3 H2512" stroke="#e3e3e3" stroke-width="2"/>
<path d="M2469.9 1346.6 L2481.7 1357.9 L2497.3 1332.6" stroke="#000" stroke-width="2.7" stroke-linecap="round" stroke-linejoin="round"/>
<path d="M2192.0 1377.3 H2512" stroke="#e3e3e3" stroke-width="2"/>
<path d="M2469.9 1412.6 L2481.7 1423.9 L2497.3 1398.6" stroke="#000" stroke-width="2.7" stroke-linecap="round" stroke-linejoin="round"/>
<path d="M2192.0 1443.3 H2512" stroke="#e3e3e3" stroke-width="2"/>
<path d="M2469.9 1478.6 L2481.7 1489.9 L2497.3 1464.6" stroke="#000" stroke-width="2.7" stroke-linecap="round" stroke-linejoin="round"/>
<path d="M2192.0 1509.3 H2512" stroke="#e3e3e3" stroke-width="2"/>
<path d="M2469.9 1544.6 L2481.7 1555.9 L2497.3 1530.6" stroke="#000" stroke-width="2.7" stroke-linecap="round" stroke-linejoin="round"/>
<path d="M2192.0 1575.3 H2512" stroke="#e3e3e3" stroke-width="2"/>
<rect x="2100" y="1584.0" width="412" height="50" rx="25" fill="#ffddb7"/>
<path d="M2079 1607.5 L2086 1614.5 L2093 1607.5" stroke="#7f7f7f" stroke-width="2.6" stroke-linecap="round" stroke-linejoin="round"/>
<path d="M2165.7 1641.3 H2512" stroke="#e3e3e3" stroke-width="2"/>
<path d="M2469.9 1676.6 L2481.7 1687.9 L2497.3 1662.6" stroke="#000" stroke-width="2.7" stroke-linecap="round" stroke-linejoin="round"/>
<path d="M2192.0 1707.3 H2512" stroke="#e3e3e3" stroke-width="2"/>
<path d="M2469.9 1742.6 L2481.7 1753.9 L2497.3 1728.6" stroke="#000" stroke-width="2.7" stroke-linecap="round" stroke-linejoin="round"/>
<path d="M2192.0 1773.3 H2512" stroke="#e3e3e3" stroke-width="2"/>
<path d="M2469.9 1808.6 L2481.7 1819.9 L2497.3 1794.6" stroke="#000" stroke-width="2.7" stroke-linecap="round" stroke-linejoin="round"/>
<path d="M2192.0 1839.3 H2512" stroke="#e3e3e3" stroke-width="2"/>
<rect x="2100" y="1848.0" width="412" height="50" rx="25" fill="#ffddb7"/>
<path d="M2079 1871.5 L2086 1878.5 L2093 1871.5" stroke="#7f7f7f" stroke-width="2.6" stroke-linecap="round" stroke-linejoin="round"/>
<path d="M2165.7 1905.3 H2512" stroke="#e3e3e3" stroke-width="2"/>
<path d="M2469.9 1940.6 L2481.7 1951.9 L2497.3 1926.6" stroke="#000" stroke-width="2.7" stroke-linecap="round" stroke-linejoin="round"/>
<path d="M2192.0 1971.3 H2512" stroke="#e3e3e3" stroke-width="2"/>
</g></svg>
<div class="abs" style="left:0;top:0;width:2592px;height:1945.8px;overflow:hidden">
<div class="t" style="left:2139.7px;top:673px;font-size:26.00px;font-weight:400;color:#000;letter-spacing:0.15px;">Fixed Expenses</div>
<div class="t" style="left:2165.8px;top:739px;font-size:26.00px;font-weight:400;color:#000;letter-spacing:0.45px;transform:scaleX(1.0172);transform-origin:0 50%;">Housing</div>
<div class="t" style="left:2191.9px;top:805px;font-size:26.00px;font-weight:400;color:#000;letter-spacing:-0.04px;">HOA Fees</div>
<div class="t" style="left:2191.9px;top:871px;font-size:26.00px;font-weight:400;color:#000;letter-spacing:0.45px;transform:scaleX(1.0179);transform-origin:0 50%;">Property tax</div>
<div class="t" style="left:2191.9px;top:937px;font-size:26.00px;font-weight:400;color:#000;letter-spacing:0.45px;transform:scaleX(1.0079);transform-origin:0 50%;">Furnishings</div>
<div class="t" style="left:2165.9px;top:1003px;font-size:26.00px;font-weight:400;color:#000;letter-spacing:0.45px;transform:scaleX(1.0180);transform-origin:0 50%;">Utilities/Bills</div>
<div class="t" style="left:2191.9px;top:1069px;font-size:26.00px;font-weight:400;color:#000;letter-spacing:0.45px;transform:scaleX(1.0264);transform-origin:0 50%;">Electricity</div>
<div class="t" style="left:2192.7px;top:1135px;font-size:26.00px;font-weight:400;color:#000;letter-spacing:-0.07px;">Gas/Oil</div>
<div class="t" style="left:2194.0px;top:1201px;font-size:26.00px;font-weight:400;color:#000;letter-spacing:0.08px;">Water</div>
<div class="t" style="left:2191.9px;top:1267px;font-size:26.00px;font-weight:400;color:#000;letter-spacing:0.45px;transform:scaleX(1.0018);transform-origin:0 50%;">Mobile Phone</div>
<div class="t" style="left:2191.6px;top:1333px;font-size:26.00px;font-weight:400;color:#000;letter-spacing:0.45px;transform:scaleX(1.0242);transform-origin:0 50%;">Internet</div>
<div class="t" style="left:2192.7px;top:1399px;font-size:26.00px;font-weight:400;color:#000;letter-spacing:0.20px;">Garbage</div>
<div class="t" style="left:2191.9px;top:1465px;font-size:26.00px;font-weight:400;color:#000;letter-spacing:0.45px;transform:scaleX(1.0177);transform-origin:0 50%;">Landscaping</div>
<div class="t" style="left:2191.9px;top:1531px;font-size:26.00px;font-weight:400;color:#000;letter-spacing:0.45px;transform:scaleX(1.0124);transform-origin:0 50%;">Pest Control</div>
<div class="t" style="left:2165.6px;top:1597px;font-size:26.00px;font-weight:400;color:#000;letter-spacing:0.45px;transform:scaleX(1.0030);transform-origin:0 50%;">Insurance</div>
<div class="t" style="left:2191.9px;top:1663px;font-size:26.00px;font-weight:400;color:#000;letter-spacing:0.45px;transform:scaleX(1.0198);transform-origin:0 50%;">Mortgage insurance</div>
<div class="t" style="left:2194.0px;top:1729px;font-size:26.00px;font-weight:400;color:#000;letter-spacing:0.15px;">Auto/Bike</div>
<div class="t" style="left:2191.9px;top:1795px;font-size:26.00px;font-weight:400;color:#000;letter-spacing:0.45px;transform:scaleX(1.0252);transform-origin:0 50%;">Life</div>
<div class="t" style="left:2167.4px;top:1861px;font-size:26.00px;font-weight:400;color:#000;letter-spacing:0.45px;transform:scaleX(1.0210);transform-origin:0 50%;">Transportation</div>
<div class="t" style="left:2194.0px;top:1927px;font-size:26.00px;font-weight:400;color:#000;letter-spacing:0.29px;">Auto loan</div>
</div>
<svg width="2592" height="1978" viewBox="0 0 2592 1978" fill="none">
<g clip-path="url(#cpL)">
<rect x="2093.6" y="675.2" width="20.2" height="20" rx="3.6" stroke="#000" stroke-width="2.4"/>
<path d="M2100 678.8 H2107.6 V680.6 H2106.3 L2106.8 685.2 C2108.3 686.0 2109.2 687.2 2109.2 688.8 H2098.4 C2098.4 687.2 2099.3 686.0 2100.8 685.2 L2101.3 680.6 H2100 Z" fill="#000"/>
<path d="M2103.8 688.5 V693.0" stroke="#000" stroke-width="1.5" stroke-linecap="round"/>
<path d="M2116.2 751.2 L2130.1 739.6 L2144 751.2" stroke="#000" stroke-width="2.5" stroke-linecap="round" stroke-linejoin="round"/>
<path d="M2140.8 741.8 V747.5" stroke="#000" stroke-width="2.4" stroke-linecap="round"/>
<path d="M2120.3 748.5 V761.8 a1.6 1.6 0 0 0 1.6 1.6 H2138.3 a1.6 1.6 0 0 0 1.6 -1.6 V748.5" stroke="#000" stroke-width="2.4"/>
<rect x="2126.7" y="754.8" width="7" height="9.4" fill="#000"/>
<circle cx="2147.1" cy="811.9" r="4.5" fill="#fdb35e"/>
<path d="M2137.9 826.3 C2138.2 822.0 2142 819.2 2147 819.2 C2149.5 819.2 2151.6 819.8 2153 820.9 C2150.6 822.6 2149.3 824.5 2149.2 826.3 C2149.2 827.0 2149.6 827.6 2150 828.2 H2139.6 C2138.4 828.2 2137.9 827.6 2137.9 826.3 Z" fill="#fdb35e"/>
<circle cx="2162" cy="810.7" r="5.2" fill="#fdb35e"/>
<path d="M2151.3 826.2 C2151.5 821.6 2156 818.7 2162 818.7 C2168 818.7 2172.5 821.6 2172.7 826.2 C2172.7 827.5 2172.2 828.2 2171 828.2 H2153 C2151.8 828.2 2151.3 827.5 2151.3 826.2 Z" fill="#fdb35e"/>
<path d="M2148 869.4 H2152.2 a3.3 3.3 0 0 0 6.6 0 H2163.2 a3 3 0 0 1 3 3 V893.4 a3 3 0 0 1 -3 3 H2148 a3 3 0 0 1 -3 -3 V872.4 a3 3 0 0 1 3 -3 Z" fill="#fdb35e"/>
<path d="M2149.9 878.1 H2160.9 M2149.9 882.2 H2155.7" stroke="#fff" stroke-width="1.5"/>
<path d="M2149.5 938.0 H2162.2 a2.6 2.6 0 0 1 2.6 2.6 V943.8 a4.2 4.2 0 0 0 -3 4 V950.8 H2150.2 V947.8 a4.2 4.2 0 0 0 -3.3 -4 V940.6 a2.6 2.6 0 0 1 2.6 -2.6 Z" fill="#fdb35e"/>
<path d="M2143 947.7 a2.9 2.9 0 0 1 5.8 0 V952.3 H2162.6 V947.7 a2.9 2.9 0 0 1 5.8 0 V955.0 a2.3 2.3 0 0 1 -2.3 2.3 H2145.3 a2.3 2.3 0 0 1 -2.3 -2.3 Z" fill="#fdb35e"/>
<path d="M2146.6 957.0 V958.9 M2164.8 957.0 V958.9" stroke="#fdb35e" stroke-width="2.6" stroke-linecap="round"/>
<path d="M2129.9 1002.2 C2131.2 1002.2 2132 1003.0 2132 1004.2 C2136 1005.4 2138 1009.2 2138 1013.5 C2138 1018.0 2139.5 1020.2 2141.5 1022.2 C2142.3 1023.2 2141.8 1024.3 2140.5 1024.3 H2119.3 C2118 1024.3 2117.5 1023.2 2118.3 1022.2 C2120.3 1020.2 2121.8 1018.0 2121.8 1013.5 C2121.8 1009.2 2123.8 1005.4 2127.8 1004.2 C2127.8 1003.0 2128.6 1002.2 2129.9 1002.2 Z" fill="#000"/>
<path d="M2125.8 1026.0 H2134 C2133.5 1028.0 2132 1029.2 2129.9 1029.2 C2127.8 1029.2 2126.3 1028.0 2125.8 1026.0 Z" fill="#000"/>
<path d="M2151.9 1089.0 C2151.9 1083.0 2148.3 1078.0 2148.3 1074.0 C2148.3 1069.6 2151.9 1066.4 2156.5 1066.4 C2161.1 1066.4 2164.8 1069.6 2164.8 1074.0 C2164.8 1078.0 2161.2 1083.0 2161.2 1089.0 Z" stroke="#fdb35e" stroke-width="1.7" stroke-linejoin="round"/>
<path d="M2151.9 1091.6 H2161.2 M2152.8 1094.0 H2160.3" stroke="#fdb35e" stroke-width="1.6"/>
<path d="M2153.6 1095.2 C2154.6 1096.6 2158.4 1096.6 2159.4 1095.2 Z" fill="#fdb35e"/>
<circle cx="2156" cy="1147.0" r="11.9" stroke="#fdb35e" stroke-width="2"/>
<path d="M2153.3 1147.4 L2161.8 1141.2 L2156.6 1149.9 a1.9 1.9 0 0 1 -3.3 -1.9 Z" fill="#fdb35e"/>
<circle cx="2156.0" cy="1139.1" r="1" fill="#fdb35e"/>
<circle cx="2150.4" cy="1141.4" r="1" fill="#fdb35e"/>
<circle cx="2148.1" cy="1147.0" r="1" fill="#fdb35e"/>
<circle cx="2150.4" cy="1152.6" r="1" fill="#fdb35e"/>
<circle cx="2161.6" cy="1152.6" r="1" fill="#fdb35e"/>
<circle cx="2163.9" cy="1147.0" r="1" fill="#fdb35e"/>
<circle cx="2156" cy="1213.0" r="11.9" stroke="#fdb35e" stroke-width="2"/>
<path d="M2156 1206.8 C2158 1209.5 2160.6 1212.5 2160.6 1214.6 A4.6 4.6 0 0 1 2151.4 1214.6 C2151.4 1212.5 2154 1209.5 2156 1206.8 Z" fill="#fdb35e"/>
<rect x="2149.2" y="1266.5" width="14.2" height="25" rx="3" fill="#ffeddb" stroke="#fdb35e" stroke-width="2"/>
<path d="M2153.6 1267.4 h5.4" stroke="#fdb35e" stroke-width="2" stroke-linecap="round"/><path d="M2153.2 1289.2 H2159.3" stroke="#fdb35e" stroke-width="1.1"/>
<circle cx="2156" cy="1345.0" r="11.9" stroke="#fdb35e" stroke-width="2"/>
<path d="M2158 1333.4 C2150 1339.0 2147.5 1349.0 2150.5 1355.2 M2159.5 1333.8 C2154.5 1341.0 2153.5 1350.0 2158.8 1356.4 M2160 1334.0 C2158.5 1340.0 2160.5 1346.0 2166 1350.6 M2145 1340.5 C2152 1344.0 2162 1342.0 2167 1339.2 M2144.6 1347.5 C2152 1350.5 2161 1349.0 2166.5 1351.5 M2148 1353.6 C2153 1350.5 2158 1351.0 2163 1354.2" stroke="#fdb35e" stroke-width="1.5"/>
<path d="M2144.2 1403.6 H2168.5" stroke="#fdb35e" stroke-width="2.2" stroke-linecap="round"/>
<path d="M2151.6 1403.6 V1400.6 a2.2 2.2 0 0 1 2.2 -2.2 H2159.3 a2.2 2.2 0 0 1 2.2 2.2 V1403.6" stroke="#fdb35e" stroke-width="2"/>
<path d="M2146.4 1404.4 H2166.3 L2165.2 1423.6 a2.6 2.6 0 0 1 -2.6 2.4 H2150.1 a2.6 2.6 0 0 1 -2.6 -2.4 Z" fill="#fdb35e"/>
<path d="M2152 1407.4 L2152.5 1422.0 M2156.35 1407.4 V1422.0 M2160.7 1407.4 L2160.2 1422.0" stroke="#fff" stroke-width="1.5" stroke-linecap="round"/>
<circle cx="2156" cy="1476.8" r="13" fill="#fdb35e"/>
<path d="M2155 1484.6 V1480.0 H2153 C2150 1480.0 2148.3 1478.4 2148.6 1476.0 C2148.8 1474.0 2150.4 1472.8 2152 1473.0 C2153 1470.6 2155 1469.4 2156.5 1469.6 C2158.5 1469.6 2160 1471.0 2160.6 1472.6 C2162.4 1472.8 2163.8 1474.4 2163.6 1476.4 C2163.6 1478.6 2161.6 1480.0 2159.4 1480.0 H2157.4 V1484.6 Z" fill="#fff"/>
<path d="M2156.2 1480.6 V1477.4 M2156.2 1479.2 L2153.8 1477.4 M2156.2 1479.2 L2158.6 1477.4" stroke="#fdb35e" stroke-width="1" stroke-linecap="round"/>
<ellipse cx="2156.2" cy="1535.4" rx="6.6" ry="4.6" fill="#fdb35e"/>
<path d="M2150.4 1530.2 L2152.4 1532.6 M2162 1530.2 L2160 1532.6" stroke="#fdb35e" stroke-width="1.7" stroke-linecap="round"/>
<path d="M2144.6 1538.4 L2148 1540.4 M2167.8 1538.4 L2164.4 1540.4 M2142.6 1547.6 H2146 M2169.8 1547.6 H2166.4 M2144.6 1556.4 L2148 1554.2 M2167.8 1556.4 L2164.4 1554.2" stroke="#fdb35e" stroke-width="1.7" stroke-linecap="round"/>
<path d="M2155.4 1539.4 C2150 1539.8 2145.6 1542.5 2145.6 1548.2 C2145.6 1554.4 2149.8 1558.6 2155.4 1559.0 Z" fill="#fdb35e"/>
<path d="M2157 1539.4 C2162.4 1539.8 2166.8 1542.5 2166.8 1548.2 C2166.8 1554.4 2162.6 1558.6 2157 1559.0 Z" fill="#fdb35e"/>
<circle cx="2151.6" cy="1543.4" r="1.25" fill="#fff"/>
<circle cx="2150.4" cy="1548.6" r="1.25" fill="#fff"/>
<circle cx="2151.6" cy="1553.8" r="1.25" fill="#fff"/>
<circle cx="2160.8" cy="1543.4" r="1.25" fill="#fff"/>
<circle cx="2162.0" cy="1548.6" r="1.25" fill="#fff"/>
<circle cx="2160.8" cy="1553.8" r="1.25" fill="#fff"/>
<path d="M2129.8 1594.8 V1599.0" stroke="#000" stroke-width="2" stroke-linecap="round"/>
<path d="M2116.9 1610.6 C2117 1603.0 2122 1597.4 2129.8 1597.4 C2137.6 1597.4 2142.4 1603.0 2142.4 1610.6 C2141 1608.4 2138 1608.2 2136.4 1610.2 C2135 1608.0 2131.4 1607.8 2129.8 1609.8 C2128.2 1607.8 2124.4 1608.0 2123.2 1610.2 C2121.6 1608.2 2118.4 1608.4 2116.9 1610.6 Z" fill="#000"/>
<path d="M2129.8 1608.0 V1618.2 a3.1 3.1 0 0 1 -6.2 0" stroke="#000" stroke-width="2" stroke-linecap="round"/>
<circle cx="2156" cy="1674.9" r="13" fill="#fdb35e"/>
<path d="M2151.2 1673.8 L2156 1670.2 L2160.8 1673.8 V1678.8 H2151.2 Z" fill="#fff"/>
<path d="M2149.4 1674.2 L2156 1669.4 L2162.6 1674.2" stroke="#fff" stroke-width="1.2" stroke-linecap="round" stroke-linejoin="round"/>
<path d="M2147.2 1675.4 L2149.6 1674.2 V1678.8 H2147.2 Z M2164.8 1675.4 L2162.4 1674.2 V1678.8 H2164.8 Z" fill="#fff"/>
<path d="M2146 1675.6 L2150.4 1672.6 M2166 1675.6 L2161.6 1672.6" stroke="#fff" stroke-width="1.1" stroke-linecap="round"/>
<circle cx="2156" cy="1676.6" r="1.3" fill="#fdb35e"/>
<g transform="translate(2156 0) scale(1.2 1) translate(-2156 0)">
<path d="M2143.8 1747.2 C2143.8 1742.0 2144.4 1740.4 2145.6 1738.6 L2147.4 1733.4 C2148 1730.8 2149.2 1729.6 2151 1729.6 H2161 C2162.8 1729.6 2164 1730.8 2164.6 1733.4 L2166.4 1738.6 C2167.6 1740.4 2168.2 1742.0 2168.2 1747.2 V1750.0 H2143.8 Z" stroke="#fdb35e" stroke-width="1.8" stroke-linejoin="round"/>
<path d="M2149.6 1733.6 C2150 1732.4 2150.6 1732.0 2151.6 1732.0 H2160.4 C2161.4 1732.0 2162 1732.4 2162.4 1733.6 L2163.8 1737.4 H2148.2 Z" fill="#fdb35e"/>
<circle cx="2148.8" cy="1744.0" r="1.9" fill="#fdb35e"/><circle cx="2163.2" cy="1744.0" r="1.9" fill="#fdb35e"/>
<path d="M2153.2 1744.2 H2158.8" stroke="#fdb35e" stroke-width="2.4" stroke-linecap="round"/>
<path d="M2143 1749.4 H2148.6 V1751.8 a1.4 1.4 0 0 1 -1.4 1.4 H2144.4 a1.4 1.4 0 0 1 -1.4 -1.4 Z M2163.4 1749.4 H2169 V1751.8 a1.4 1.4 0 0 1 -1.4 1.4 H2164.8 a1.4 1.4 0 0 1 -1.4 -1.4 Z" fill="#fdb35e"/>
</g>
<g transform="translate(2156 0) scale(1.2 1) translate(-2156 0)">
<path d="M2143.8 1945.2 C2143.8 1940.0 2144.4 1938.4 2145.6 1936.6 L2147.4 1931.4 C2148 1928.8 2149.2 1927.6 2151 1927.6 H2161 C2162.8 1927.6 2164 1928.8 2164.6 1931.4 L2166.4 1936.6 C2167.6 1938.4 2168.2 1940.0 2168.2 1945.2 V1948.0 H2143.8 Z" stroke="#fdb35e" stroke-width="1.8" stroke-linejoin="round"/>
<path d="M2149.6 1931.6 C2150 1930.4 2150.6 1930.0 2151.6 1930.0 H2160.4 C2161.4 1930.0 2162 1930.4 2162.4 1931.6 L2163.8 1935.4 H2148.2 Z" fill="#fdb35e"/>
<circle cx="2148.8" cy="1942.0" r="1.9" fill="#fdb35e"/><circle cx="2163.2" cy="1942.0" r="1.9" fill="#fdb35e"/>
<path d="M2153.2 1942.2 H2158.8" stroke="#fdb35e" stroke-width="2.4" stroke-linecap="round"/>
<path d="M2143 1947.4 H2148.6 V1949.8 a1.4 1.4 0 0 1 -1.4 1.4 H2144.4 a1.4 1.4 0 0 1 -1.4 -1.4 Z M2163.4 1947.4 H2169 V1949.8 a1.4 1.4 0 0 1 -1.4 1.4 H2164.8 a1.4 1.4 0 0 1 -1.4 -1.4 Z" fill="#fdb35e"/>
</g>
<path d="M2153.4 1794.8 H2159 a2 2 0 0 1 2 2 V1803.1 H2167.3 a2 2 0 0 1 2 2 V1810.7 a2 2 0 0 1 -2 2 H2161 V1819.0 a2 2 0 0 1 -2 2 H2153.4 a2 2 0 0 1 -2 -2 V1812.7 H2145.1 a2 2 0 0 1 -2 -2 V1805.1 a2 2 0 0 1 2 -2 H2151.4 V1796.8 a2 2 0 0 1 2 -2 Z" fill="#fdb35e"/>
<rect x="2112" y="1860.1" width="24" height="23.4" rx="2.6" fill="#000"/>
<path d="M2137.2 1867.4 H2142.6 C2143.6 1867.4 2144.2 1867.8 2144.8 1868.6 L2148.4 1873.6 C2148.8 1874.2 2149 1874.8 2149 1875.6 V1881.5 a2 2 0 0 1 -2 2 H2137.2 Z M2139.4 1869.6 V1874.6 H2146 L2142.6 1870.4 C2142.3 1869.9 2142 1869.6 2141.4 1869.6 Z" fill="#000" fill-rule="evenodd"/>
<circle cx="2121.4" cy="1883.3" r="5.4" fill="#ffddb7"/><circle cx="2121.4" cy="1883.3" r="3.9" fill="#000"/>
<circle cx="2139.7" cy="1883.3" r="5.4" fill="#ffddb7"/><circle cx="2139.7" cy="1883.3" r="3.9" fill="#000"/>
</g></svg>
<div class="abs" style="left:0;top:1px;width:2590px;height:1977px;border-radius:52px;box-shadow:inset 0 1.5px 0 rgba(255,255,255,.55);pointer-events:none"></div>
</div></div>
</body></html>
